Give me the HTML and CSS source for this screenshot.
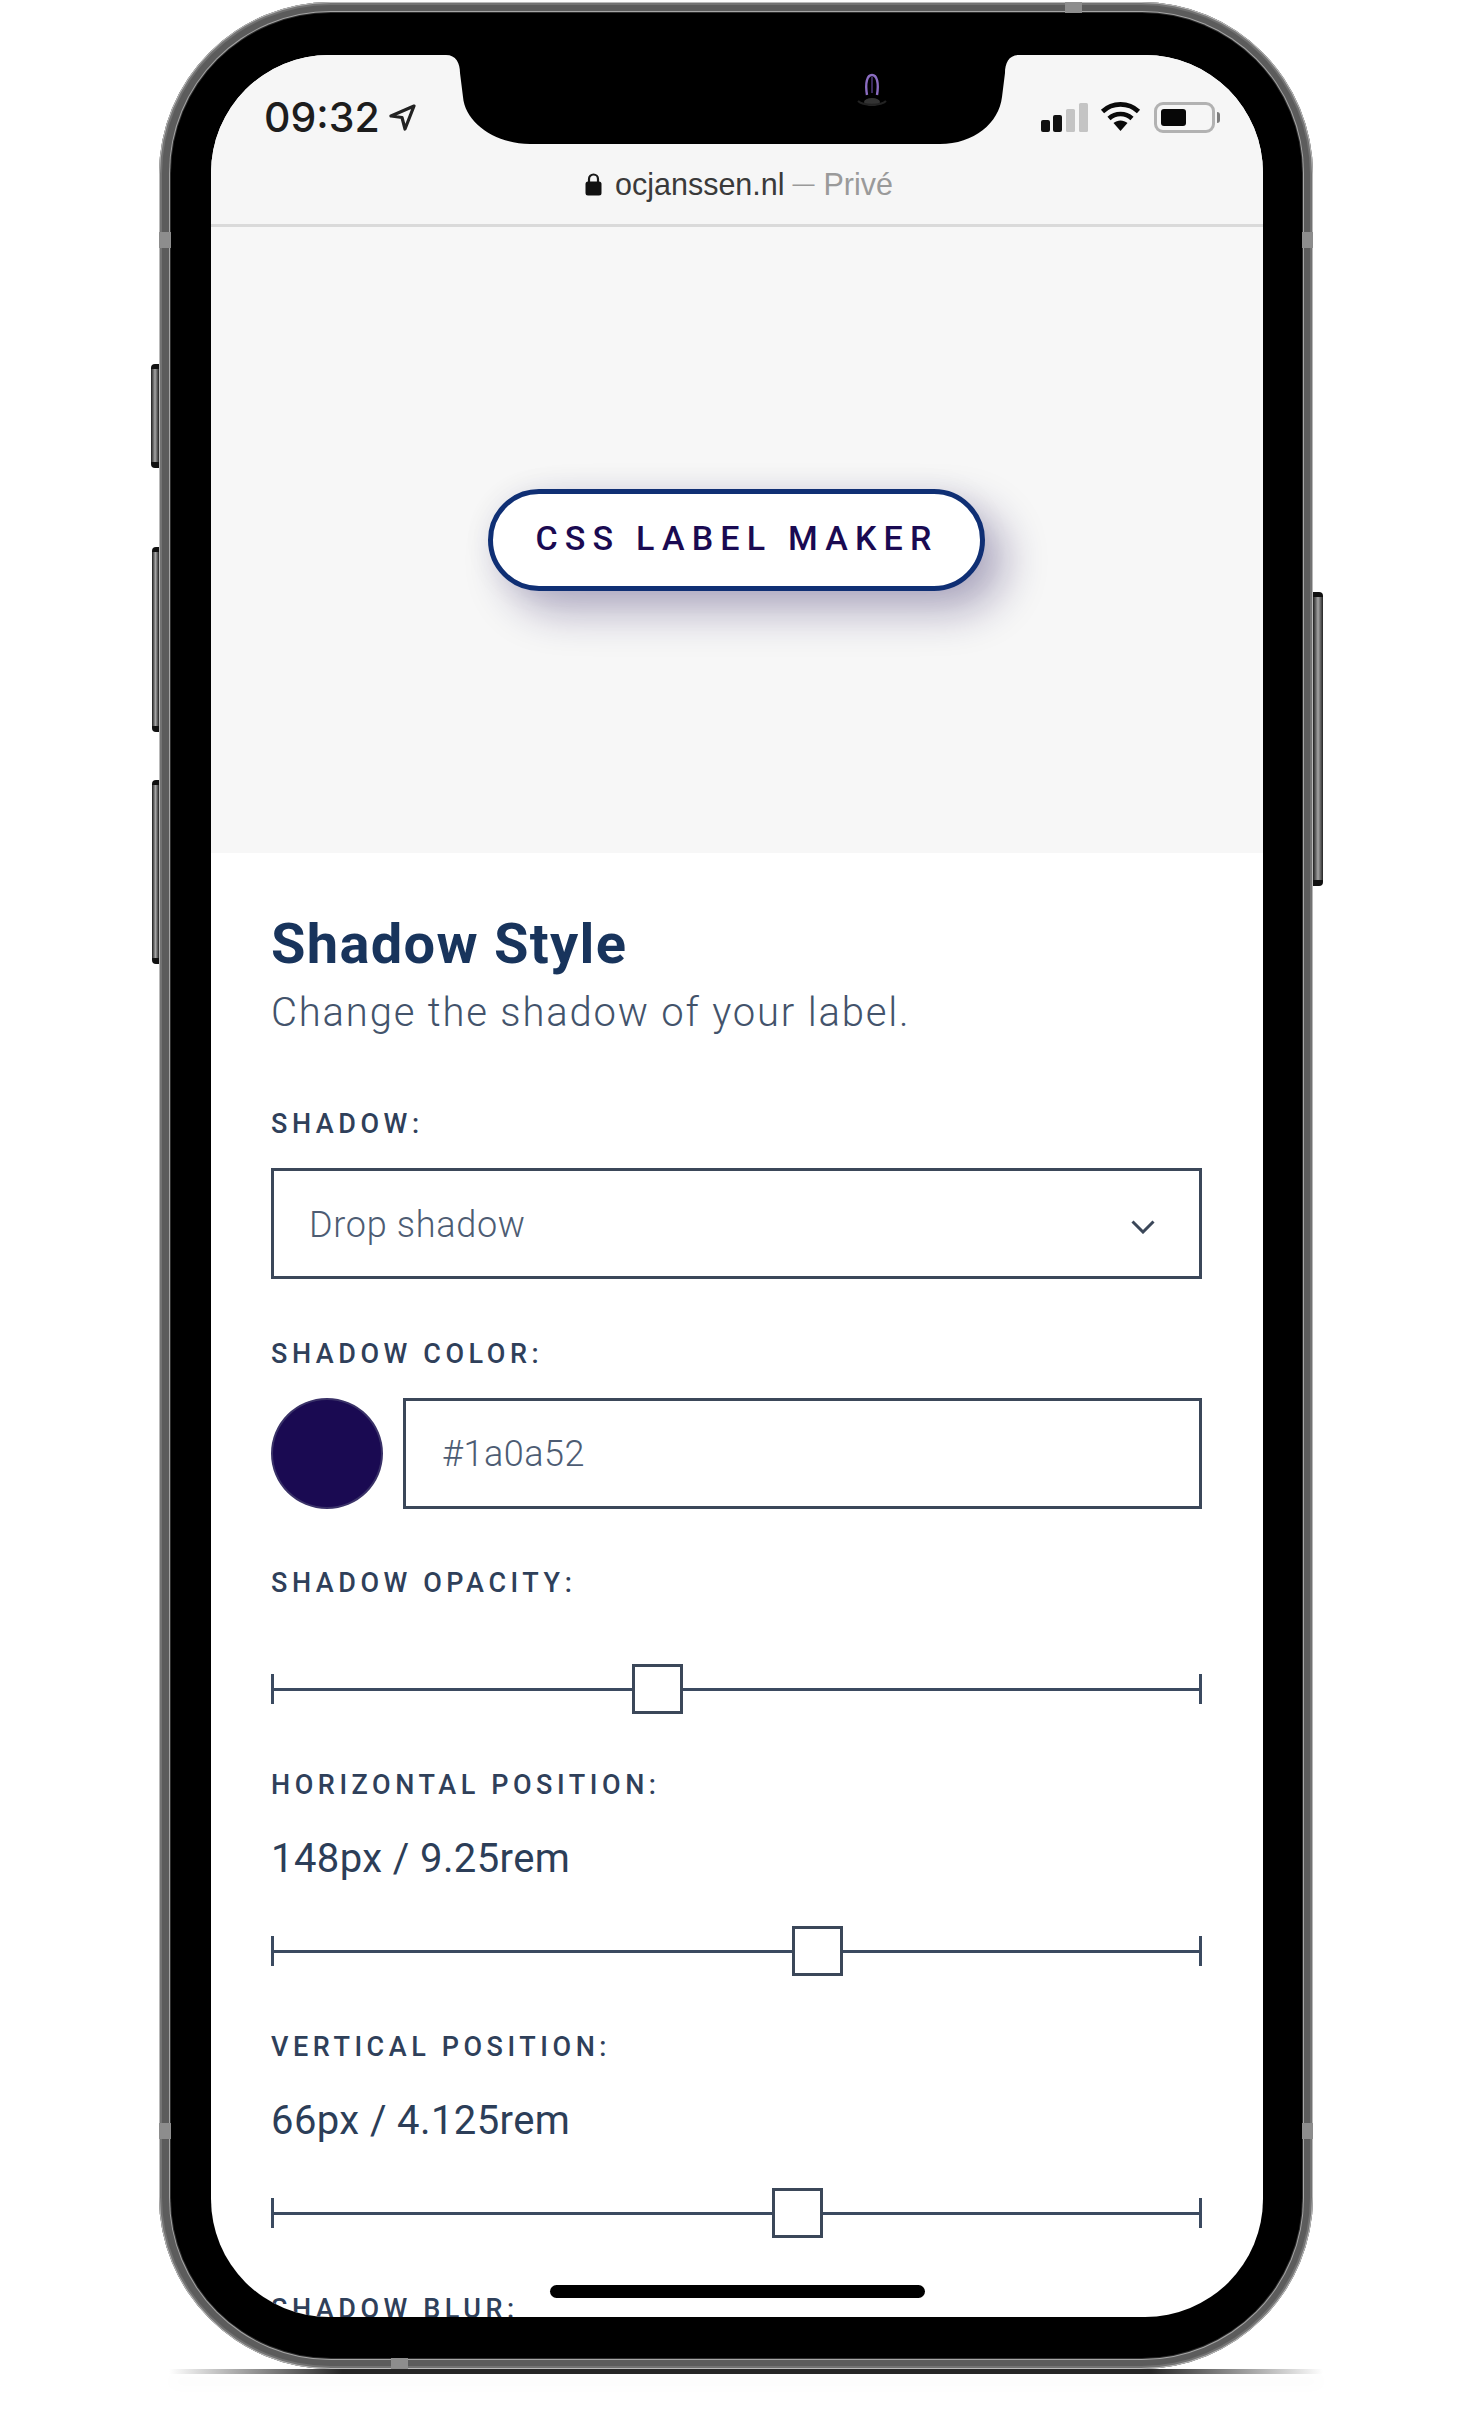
FILE: index.html
```html
<!DOCTYPE html>
<html lang="en">
<head>
<meta charset="utf-8">
<title>CSS Label Maker</title>
<link rel="stylesheet" href="styles.css">
</head>
<body>
<div class="phone">
  <span class="side side-a"></span>
  <span class="side side-b"></span>
  <span class="side side-c"></span>
  <span class="side side-power"></span>
  <span class="band band-left-top"></span>
  <span class="band band-right-top"></span>
  <span class="band band-left-bottom"></span>
  <span class="band band-right-bottom"></span>
  <span class="band band-top"></span>
  <span class="band band-bottom"></span>
  <div class="ground"></div>
  <div class="bezel">
    <div class="screen">
      <header class="chrome">
        <div class="status">
          <div class="clock">
            <span class="time">09:32</span>
            <svg class="loc" viewBox="0 0 27 27" width="27" height="27"><path d="M25 2 2 12 13 13.500 16 25Z" fill="none" stroke="#222" stroke-width="3.200" stroke-linejoin="round"/></svg>
          </div>
          <div class="indicators">
            <svg class="signal" viewBox="0 0 47 29" width="47" height="29">
              <rect x="0" y="17" width="9" height="12" rx="2" fill="#111"/>
              <rect x="12" y="12" width="9" height="17" rx="2" fill="#111"/>
              <rect x="25" y="6" width="9" height="23" rx="1.500" fill="#c4c4c4"/>
              <rect x="38" y="0" width="9" height="29" rx="1.500" fill="#c4c4c4"/>
            </svg>
            <svg class="wifi" viewBox="0 0 41 30" width="41" height="30">
              <path d="M2.500 10.500C12.500 1 28.500 1 38.500 10.500" fill="none" stroke="#0a0a0a" stroke-width="4.600"/>
              <path d="M9 17.500C15.500 11.500 25.500 11.500 32 17.500" fill="none" stroke="#0a0a0a" stroke-width="4.600"/>
              <path d="M13.500 22 20.500 30 27.500 22C23.500 18.500 17.500 18.500 13.500 22Z" fill="#0a0a0a"/>
            </svg>
            <div class="battery"><span class="charge"></span></div>
            <span class="nub"></span>
          </div>
        </div>
        <div class="address">
          <svg class="lock" viewBox="0 0 17 24" width="17" height="24"><path d="M4 10V7a4.500 4.500 0 0 1 9 0v3" fill="none" stroke="#1a1a1a" stroke-width="2.200"/><rect x="0.500" y="9.500" width="16" height="14" rx="2.500" fill="#111"/></svg>
          <span class="host">ocjanssen.nl</span>
          <span class="dash">—</span>
          <span class="private">Privé</span>
        </div>
      </header>

      <section class="preview">
        <div class="label-demo">CSS LABEL MAKER</div>
      </section>

      <main class="form">
        <h1 class="title">Shadow Style</h1>
        <p class="intro">Change the shadow of your label.</p>

        <div class="field-label first">SHADOW:</div>
        <div class="select">
          <span class="input-text">Drop shadow</span>
          <svg class="chevron" viewBox="0 0 24 14" width="24" height="14"><path d="M1.500 1.500 12 12 22.500 1.500" fill="none" stroke="#3b4759" stroke-width="3"/></svg>
        </div>

        <div class="field-label color">SHADOW COLOR:</div>
        <div class="color-row">
          <span class="swatch"></span>
          <div class="hex"><span class="input-text">#1a0a52</span></div>
        </div>

        <div class="field-label opacity">SHADOW OPACITY:</div>
        <div class="slider slider-bare"><span class="thumb" style="left:361px"></span></div>

        <div class="field-label after-slider">HORIZONTAL POSITION:</div>
        <div class="value">148px / 9.25rem</div>
        <div class="slider"><span class="thumb" style="left:521px"></span></div>

        <div class="field-label after-slider">VERTICAL POSITION:</div>
        <div class="value">66px / 4.125rem</div>
        <div class="slider"><span class="thumb" style="left:501px"></span></div>

        <div class="field-label after-slider">SHADOW BLUR:</div>
      </main>

      <svg class="notch" viewBox="0 0 1052 92" width="1052" height="92">
        <path d="M235 -1H808V0C798 0 794 8 794 18L791 42C788 68 763 89 729 89H319C285 89 254 68 252 42L249 18C249 8 245 0 235 0Z" fill="#000"/>
        <g class="camera">
          <path d="M656 40C654 28 656 20 661 20C666 20 668 28 666 40" fill="none" stroke="#8a6cc0" stroke-width="2.400"/>
          <path d="M661 22V38" stroke="#3a2a5c" stroke-width="2"/>
          <ellipse cx="661" cy="47" rx="8" ry="4" fill="#333"/>
          <path d="M647 46C652 51 670 51 675 46" fill="none" stroke="#222" stroke-width="2"/>
        </g>
      </svg>
      <span class="home-bar"></span>
    </div>
  </div>
</div>
</body>
</html>
```

FILE: styles.css
```css
* { box-sizing: border-box; }

html, body { margin: 0; padding: 0; background: #fff; }

body {
  width: 1480px;
  height: 2410px;
  padding: 2px 0 0 159px;
  overflow: hidden;
  font-family: Roboto, "Liberation Sans", sans-serif;
}

/* device */
.phone {
  position: relative;
  width: 1154px;
  height: 2367px;
  padding: 11px 11px 11px 12px;
  border-radius: 172px;
  background: #5c5c5c;
  box-shadow: inset 0 0 0 1px #b9b9b9, inset 0 0 0 3px #737373;
}

.bezel {
  height: 100%;
  padding: 42px 39px 41px 40px;
  border-radius: 160px;
  background: #000;
  box-shadow: 0 0 0 1px #2e2e2e, 0 0 0 2px #a6a6a6;
}

.side {
  position: absolute;
  background: linear-gradient(to right, #1e1e1e 0, #6d6d6d 30%, #a5a5a5 50%, #585858 80%, #222 100%);
  border-top: 5px solid #111;
  border-bottom: 6px solid #111;
}

.side-a { left: -8px; top: 362px; width: 8px; height: 104px; border-radius: 4px 0 0 4px; }
.side-b { left: -7px; top: 545px; width: 7px; height: 185px; border-radius: 4px 0 0 4px; }
.side-c { left: -7px; top: 778px; width: 7px; height: 184px; border-radius: 4px 0 0 4px; }
.side-power { right: -10px; top: 590px; width: 10px; height: 294px; border-radius: 0 4px 4px 0; }

.band { position: absolute; background: #8d8d8d; z-index: 1; }
.band-left-top { left: 0; top: 230px; width: 12px; height: 16px; }
.band-right-top { right: 0; top: 230px; width: 11px; height: 16px; }
.band-left-bottom { left: 0; top: 2121px; width: 12px; height: 16px; }
.band-right-bottom { right: 0; top: 2121px; width: 11px; height: 16px; }
.band-top { left: 906px; top: 0; width: 17px; height: 11px; }
.band-bottom { left: 232px; bottom: 0; width: 17px; height: 11px; }

.ground {
  position: absolute;
  left: 10px;
  right: -10px;
  top: 100%;
  height: 5px;
  background: linear-gradient(to right, rgba(30,30,30,0), #262626 15%, #262626 85%, rgba(30,30,30,0));
  box-shadow: 0 10px 16px rgba(0,0,0,.035);
}

.screen {
  position: relative;
  display: flex;
  flex-direction: column;
  height: 100%;
  overflow: hidden;
  border-radius: 118px;
  background: #fff;
}

/* browser chrome */
.chrome {
  flex: none;
  height: 172px;
  padding-top: 47px;
  border-bottom: 3px solid #dadada;
  background: #f6f6f6;
}

.status {
  display: flex;
  justify-content: space-between;
  height: 31px;
  padding: 0 43px 0 53px;
}

.clock { display: flex; align-items: center; }

.time {
  font: 500 41px/31px Inter, sans-serif;
  color: #1d1d1d;
}

.loc { margin-left: 9px; }

.indicators { display: flex; align-items: center; }

.wifi { margin: -3px 0 0 12px; }

.battery {
  width: 61px;
  height: 31px;
  margin-left: 13px;
  padding: 4px;
  border: 3px solid #b2b2b2;
  border-radius: 9px;
}

.charge {
  display: block;
  width: 25px;
  height: 100%;
  border-radius: 3px;
  background: #070707;
}

.nub {
  width: 3px;
  height: 11px;
  margin-left: 2px;
  border-radius: 0 3px 3px 0;
  background: #7d7d7d;
}

.address {
  display: flex;
  align-items: center;
  justify-content: center;
  height: 36px;
  margin-top: 33px;
  padding-left: 4px;
  font: 400 30.5px/36px "Liberation Sans", sans-serif;
}

.lock { margin-right: 13px; }
.host { color: #3a3a3a; }
.dash { margin-left: 8px; font-size: 22px; color: #9a9a9a; }
.private { margin-left: 9px; color: #9a9a9a; }

/* preview */
.preview {
  flex: none;
  display: flex;
  align-items: center;
  justify-content: center;
  height: 626px;
  padding-right: 2px;
  background: #f7f7f7;
}

.label-demo {
  display: flex;
  align-items: center;
  justify-content: center;
  width: 497px;
  height: 102px;
  padding: 0 0 5px 2px;
  border: 5px solid #0f2f74;
  border-radius: 60px;
  background: #fff;
  color: #1a0a52;
  font-size: 34px;
  font-weight: 500;
  letter-spacing: 7.2px;
  box-shadow: 20px 20px 44px rgba(26,10,82,.32), 0 0 30px rgba(26,10,82,.06);
}

/* form */
.form {
  flex: none;
  padding: 61px 61px 0 60px;
}

.title {
  margin: 0;
  font-size: 56px;
  font-weight: 700;
  line-height: 60px;
  letter-spacing: 1.3px;
  color: #18345c;
}

.intro {
  margin: 15px 0 0;
  font-size: 40px;
  font-weight: 300;
  line-height: 48px;
  letter-spacing: 1.82px;
  color: #43536b;
}

.field-label {
  font-size: 27px;
  font-weight: 500;
  line-height: 32px;
  letter-spacing: 4.55px;
  color: #2f405a;
}

.field-label.first { margin-top: 71px; }
.field-label.color { margin-top: 59px; }
.field-label.opacity { margin-top: 58px; }
.field-label.after-slider { margin-top: 55px; }

.select, .hex {
  display: flex;
  align-items: center;
  height: 111px;
  border: 3px solid #3b4759;
}

.select {
  justify-content: space-between;
  margin-top: 28px;
  padding: 2px 44px 0 35px;
}

.chevron { margin-top: 4px; }

.input-text {
  font-size: 36px;
  font-weight: 300;
  letter-spacing: .7px;
  color: #4d5c73;
}

.hex .input-text { letter-spacing: .5px; }

.color-row {
  display: flex;
  align-items: center;
  gap: 20px;
  margin-top: 28px;
}

.swatch {
  flex: none;
  width: 112px;
  height: 111px;
  border: 2px solid #3a3268;
  border-radius: 50%;
  background: #1a0a52;
}

.hex { flex: 1; padding-left: 36px; }

.value {
  margin-top: 34px;
  font-size: 40px;
  font-weight: 400;
  line-height: 48px;
  letter-spacing: .4px;
  color: #2c3e58;
}

.slider {
  position: relative;
  height: 50px;
  margin-top: 43px;
}

.slider-bare { margin-top: 65px; }

.slider::before {
  content: "";
  position: absolute;
  left: 0;
  right: 0;
  top: 10px;
  height: 30px;
  border-left: 3px solid #3b4a60;
  border-right: 3px solid #3b4a60;
  background: linear-gradient(#3b4a60, #3b4a60) center / 100% 3px no-repeat;
}

.thumb {
  position: absolute;
  top: 0;
  width: 51px;
  height: 50px;
  border: 3px solid #3b4759;
  background: #fff;
}

/* overlays */
.notch { position: absolute; left: 0; top: 0; overflow: visible; }

.home-bar {
  position: absolute;
  left: 339px;
  bottom: 19px;
  width: 375px;
  height: 13px;
  border-radius: 7px;
  background: #000;
}
```
